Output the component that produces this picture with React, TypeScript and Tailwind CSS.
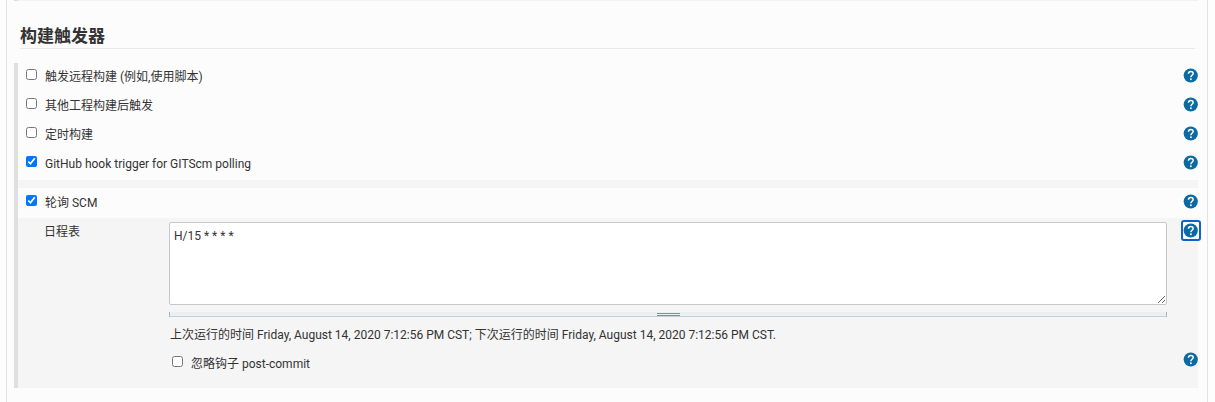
import { useState } from "react";

function HelpButton({ label, focused = false }: { label: string; focused?: boolean }) {
  return (
    <button
      type="button"
      aria-label={label}
      className={
        focused
          ? "-m-[3px] flex shrink-0 rounded-[3px] border-2 border-[#0b62d0] bg-[#fcfcfc] py-px pr-px outline-none"
          : "flex shrink-0"
      }
    >
      <svg viewBox="0 0 30 30" className="size-[15px]" aria-hidden="true">
        <circle cx="15.5" cy="15" r="14.2" fill="#0b6aa2" />
        <path
          d="M10.8 11.4C11 8.4 12.9 6.8 15.5 6.8c2.9 0 4.8 1.6 4.8 4.1 0 3.6-4.6 3.5-4.6 7.4"
          fill="none"
          stroke="#fff"
          strokeWidth="2.9"
        />
        <rect x="14" y="20.8" width="3.4" height="3.4" fill="#fff" />
      </svg>
    </button>
  );
}

function Option({ label, checked = false }: { label: string; checked?: boolean }) {
  const [on, setOn] = useState(checked);
  return (
    <label className="flex items-start gap-2 pt-px">
      <input
        type="checkbox"
        checked={on}
        onChange={(e) => setOn(e.target.checked)}
        className="m-0 size-[11px] accent-[#0075ff]"
      />
      <span className="leading-4">{label}</span>
    </label>
  );
}

function TriggerRow({ label, checked }: { label: string; checked?: boolean }) {
  return (
    <div className="flex h-[29px] items-start justify-between bg-[#fcfcfc] pt-[5px] pl-2">
      <Option label={label} checked={checked} />
      <HelpButton label={`帮助: ${label}`} />
    </div>
  );
}

export default function App() {
  return (
    <div className="bg-[#fdfdfd] pr-[7px] pl-[6px] font-['Roboto','Noto_Sans_CJK_SC',sans-serif] text-xs text-[#333]">
      <main className="border-x border-[#e3e3e3] bg-[#fcfcfc] pr-[9px] pb-[14px] pl-[7px]">
        <div className="h-px border-l-4 border-[#dedede] bg-[#f2f2f2]" />
        <h2 className="mr-[3px] ml-[6px] border-b border-[#eaeaea] pt-[23px] text-[17px] leading-6 font-bold">
          构建触发器
        </h2>
        <form className="mt-[14px] border-l-4 border-[#dfdfdf] bg-[#f5f5f5] pb-4">
          <div className="bg-[#fcfcfc] pb-px">
            <TriggerRow label="触发远程构建 (例如,使用脚本)" />
            <TriggerRow label="其他工程构建后触发" />
            <TriggerRow label="定时构建" />
            <TriggerRow label="GitHub hook trigger for GITScm polling" checked />
          </div>
          <div className="mt-2 bg-[#fcfcfc] pt-px">
            <TriggerRow label="轮询 SCM" checked />
          </div>
          <div className="flex items-start pt-1 pl-[26px]">
            <label htmlFor="schedule" className="w-[125px] shrink-0 pt-0.5 leading-4">
              日程表
            </label>
            <div className="min-w-0 flex-1">
              <textarea
                id="schedule"
                defaultValue="H/15 * * * *"
                className="block h-[83px] w-full resize-y rounded-xs border border-[#c8c8c8] bg-white px-1 py-[5px] leading-4 outline-none"
              />
              <div className="mt-[7px] flex h-[5px] items-start justify-center border-x border-b border-x-[#a3b3bd] border-b-[#c3d0d6] bg-[#eaeff2]">
                <span className="mt-px h-[3px] w-[23px] border-y border-[#839193]" />
              </div>
            </div>
            <div className="flex w-[31px] justify-end pt-px">
              <HelpButton label="帮助: 日程表" focused />
            </div>
          </div>
          <p className="mt-[10px] ml-[152px] leading-4">
            上次运行的时间 Friday, August 14, 2020 7:12:56 PM CST; 下次运行的时间 Friday, August 14, 2020 7:12:56 PM CST.
          </p>
          <div className="mt-[9px] ml-[154px] flex items-start justify-between">
            <div className="pt-[3px]">
              <Option label="忽略钩子 post-commit" />
            </div>
            <HelpButton label="帮助: 忽略钩子 post-commit" />
          </div>
        </form>
      </main>
    </div>
  );
}
